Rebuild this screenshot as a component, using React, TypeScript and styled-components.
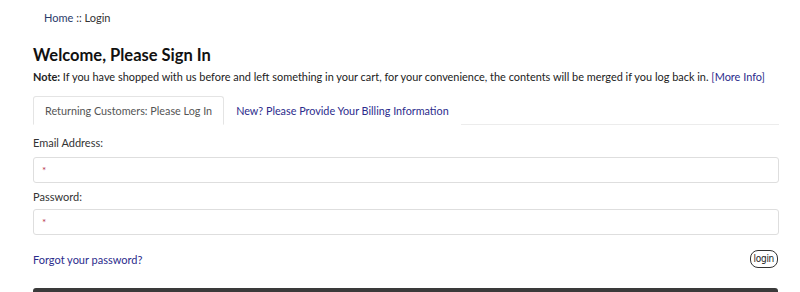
import React from "react";
import styled, { createGlobalStyle } from "styled-components";

const GlobalStyle = createGlobalStyle`
  body {
    margin: 0;
    background: #fff;
    font-family: "Lato", "Open Sans", sans-serif;
    color: #222;
  }
`;

const Page = styled.div`
  padding: 0 21px 0 33px;
  height: 292px;
  overflow: hidden;
`;

const Breadcrumb = styled.div`
  padding: 10px 0 0 11px;
  font-size: 11px;
  line-height: 16px;
  color: #333;

  a {
    color: #2a3a6a;
    text-decoration: none;
  }
`;

const Heading = styled.h1`
  margin: 17px 0 0;
  font-size: 16.5px;
  font-weight: 700;
  line-height: 24px;
  color: #111;
`;

const Note = styled.p`
  margin: 2px 0 0;
  font-size: 10.93px;
  line-height: 16px;
  color: #222;
  white-space: nowrap;

  strong {
    font-weight: 700;
  }
`;

const Link = styled.a`
  color: #2b2b8c;
  text-decoration: none;
`;

const Tabs = styled.div`
  display: flex;
  margin-top: 11px;
  border-bottom: 1px solid #ececec;
`;

const Tab = styled.div<{ $active?: boolean }>`
  height: 27px;
  padding: 0 11px;
  display: flex;
  align-items: center;
  font-size: 10.8px;
  margin-bottom: -1px;
  color: ${({ $active }) => ($active ? "#555" : "#2b2b8c")};
  background: #fff;
  border: 1px solid ${({ $active }) => ($active ? "#e4e4e4" : "transparent")};
  border-bottom-color: ${({ $active }) => ($active ? "#fff" : "transparent")};
  border-radius: 3px 3px 0 0;
`;

const Label = styled.label<{ $first?: boolean }>`
  display: block;
  font-size: 11px;
  line-height: 16px;
  color: #333;
  margin: ${({ $first }) => ($first ? "10px 0 6px" : "6px 0 4px")};
`;

const Field = styled.div`
  height: 26px;
  border: 1px solid #dedede;
  border-radius: 3px;
  box-sizing: border-box;
  display: flex;
  align-items: center;
  padding-left: 8px;
  font-size: 10px;
  color: #b8344c;
`;

const Actions = styled.div`
  display: flex;
  justify-content: space-between;
  align-items: center;
  height: 18px;
  margin-top: 15px;
  font-size: 11px;
`;

const LoginButton = styled.button`
  font-family: "DejaVu Sans Condensed", "Liberation Sans Narrow", sans-serif;
  font-size: 10px;
  letter-spacing: -0.3px;
  line-height: 12px;
  height: 18px;
  padding: 0 3px;
  background: #fff;
  color: #222;
  border: 1.5px solid #333;
  border-radius: 8px;
  margin-right: 1px;
`;

const Footer = styled.div`
  margin-top: 20px;
  height: 10px;
  background: #3a3a3a;
  border-radius: 3px 3px 0 0;
  margin-right: 1px;
`;

export default function App() {
  return (
    <>
      <GlobalStyle />
      <Page>
        <Breadcrumb>
          <a>Home</a> :: Login
        </Breadcrumb>
        <Heading>Welcome, Please Sign In</Heading>
        <Note>
          <strong>Note:</strong> If you have shopped with us before and left something in your cart, for your
          convenience, the contents will be merged if you log back in. <Link>[More Info]</Link>
        </Note>
        <Tabs>
          <Tab $active>Returning Customers: Please Log In</Tab>
          <Tab>New? Please Provide Your Billing Information</Tab>
        </Tabs>
        <Label $first>Email Address:</Label>
        <Field>*</Field>
        <Label>Password:</Label>
        <Field>*</Field>
        <Actions>
          <Link>Forgot your password?</Link>
          <LoginButton>login</LoginButton>
        </Actions>
        <Footer />
      </Page>
    </>
  );
}
